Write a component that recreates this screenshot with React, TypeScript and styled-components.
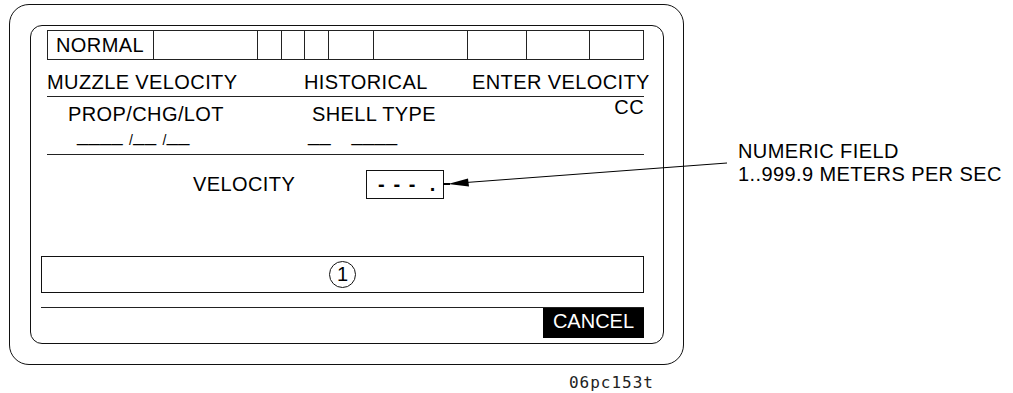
import React from "react";
import styled, { createGlobalStyle } from "styled-components";

const GlobalStyle = createGlobalStyle`
  html, body { margin: 0; padding: 0; background: #fff; }
  body { font-family: "Liberation Sans", Arial, sans-serif; color: #000; }
`;

const Figure = styled.div`
  position: relative;
  width: 1013px;
  height: 393px;
  box-sizing: border-box;
  padding: 4px 0 0 9px;
  display: flex;
  align-items: flex-start;
  font-family: "Liberation Sans", Arial, sans-serif;
  font-size: 20px;
  line-height: 23px;
  letter-spacing: 0.4px;
  color: #000;
  overflow: hidden;
`;

const DeviceColumn = styled.div`
  display: flex;
  flex-direction: column;
  flex: none;
`;

const OuterFrame = styled.div`
  box-sizing: border-box;
  width: 675px;
  height: 361px;
  border: 1px solid #111;
  border-radius: 20px;
  padding: 20px 19px 20px 20px;
`;

const InnerFrame = styled.div`
  box-sizing: border-box;
  width: 634px;
  height: 319px;
  border: 1px solid #111;
  border-radius: 12px;
  padding: 4px 19px 0 10px;
  display: flex;
  flex-direction: column;
`;

const TopSection = styled.div`
  margin-left: 6px;
  display: flex;
  flex-direction: column;
`;

const StatusBar = styled.div`
  display: flex;
  height: 30px;
  box-sizing: border-box;
  border: 1px solid #222;
`;

const StatusCell = styled.div<{ $w: number; $last?: boolean }>`
  box-sizing: border-box;
  flex: none;
  width: ${(p) => p.$w}px;
  border-right: ${(p) => (p.$last ? "none" : "1px solid #222")};
  padding-left: 8px;
  line-height: 28px;
  white-space: nowrap;
`;

const LabelRow = styled.div<{ $cols: string; $top: number; $pad?: number; $h?: number }>`
  display: grid;
  grid-template-columns: ${(p) => p.$cols};
  margin-top: ${(p) => p.$top}px;
  padding-left: ${(p) => p.$pad ?? 0}px;
  height: ${(p) => p.$h ?? 23}px;
  line-height: ${(p) => p.$h ?? 23}px;
  white-space: nowrap;
`;

const RaisedRight = styled.span`
  justify-self: end;
  margin-top: -7px;
`;

const Slash = styled.span`
  font-size: 14px;
  line-height: 1;
  vertical-align: -4px;
`;

const Rule = styled.div<{ $top: number }>`
  height: 1px;
  background: #222;
  margin-top: ${(p) => p.$top}px;
`;

const FieldRow = styled.div`
  display: grid;
  grid-template-columns: 173px auto;
  align-items: center;
  margin-top: 15px;
  padding-left: 146px;
  height: 29px;
  white-space: nowrap;
`;

const InputBox = styled.div`
  box-sizing: border-box;
  width: 78px;
  height: 29px;
  border: 1px solid #111;
  display: flex;
  align-items: center;
  justify-content: space-between;
  padding: 0 6px 0 11px;
  font-weight: bold;
  letter-spacing: 1.6px;
`;

const MessageBox = styled.div`
  box-sizing: border-box;
  margin-top: 57px;
  height: 37px;
  border: 1px solid #111;
  display: flex;
  align-items: center;
  justify-content: center;
`;

const CircledNumber = styled.span`
  box-sizing: border-box;
  width: 27px;
  height: 27px;
  border: 1px solid #111;
  border-radius: 50%;
  display: flex;
  align-items: center;
  justify-content: center;
  font-size: 20px;
  letter-spacing: 0;
`;

const CancelKey = styled.div`
  align-self: flex-end;
  box-sizing: border-box;
  width: 101px;
  height: 30px;
  background: #000;
  color: #fff;
  text-align: center;
  line-height: 27px;
  letter-spacing: 0;
`;

const Caption = styled.div`
  align-self: flex-end;
  margin: 9px 30px 0 0;
  font-family: "DejaVu Sans Mono", "Liberation Mono", monospace;
  font-size: 16px;
  line-height: 18px;
  letter-spacing: 1px;
  color: #222;
`;

const Callout = styled.div`
  margin: 136px 0 0 54px;
  white-space: nowrap;
`;

const Leader = styled.svg`
  position: absolute;
  left: 0;
  top: 0;
  pointer-events: none;
`;

const cells = [106, 104, 24, 23, 24, 45, 94, 59, 63, 53];

export default function App() {
  return (
    <>
      <GlobalStyle />
      <Figure>
        <DeviceColumn>
          <OuterFrame>
            <InnerFrame>
              <TopSection>
                <StatusBar>
                  {cells.map((w, i) => (
                    <StatusCell key={i} $w={w} $last={i === cells.length - 1}>
                      {i === 0 ? "NORMAL" : ""}
                    </StatusCell>
                  ))}
                </StatusBar>
                <LabelRow $cols="257px 168px auto" $top={11}>
                  <span>MUZZLE VELOCITY</span>
                  <span>HISTORICAL</span>
                  <span>ENTER VELOCITY</span>
                </LabelRow>
                <Rule $top={2} />
                <LabelRow $cols="244px 1fr auto" $top={6} $pad={21}>
                  <span>PROP/CHG/LOT</span>
                  <span>SHELL TYPE</span>
                  <RaisedRight>CC</RaisedRight>
                </LabelRow>
                <LabelRow $cols="231px auto" $top={0} $pad={30} $h={16}>
                  <span>
                    ____ <Slash>/</Slash>__ <Slash>/</Slash>__
                  </span>
                  <span>{"__\u2003____"}</span>
                </LabelRow>
                <Rule $top={12} />
                <FieldRow>
                  <span>VELOCITY</span>
                  <InputBox>
                    <span>- - -</span>
                    <span>.</span>
                  </InputBox>
                </FieldRow>
              </TopSection>
              <MessageBox>
                <CircledNumber>1</CircledNumber>
              </MessageBox>
              <Rule $top={14} />
              <CancelKey>CANCEL</CancelKey>
            </InnerFrame>
          </OuterFrame>
          <Caption>06pc153t</Caption>
        </DeviceColumn>
        <Callout>
          NUMERIC FIELD
          <br />
          1..999.9 METERS PER SEC
        </Callout>
        <Leader width={1013} height={393} viewBox="0 0 1013 393">
          <line x1="443" y1="184" x2="450" y2="184" stroke="#000" strokeWidth="2" />
          <line x1="466" y1="182.5" x2="727" y2="163" stroke="#000" strokeWidth="1" />
          <polygon points="448,184 468,178.6 469,186.4" fill="#000" />
        </Leader>
      </Figure>
    </>
  );
}
